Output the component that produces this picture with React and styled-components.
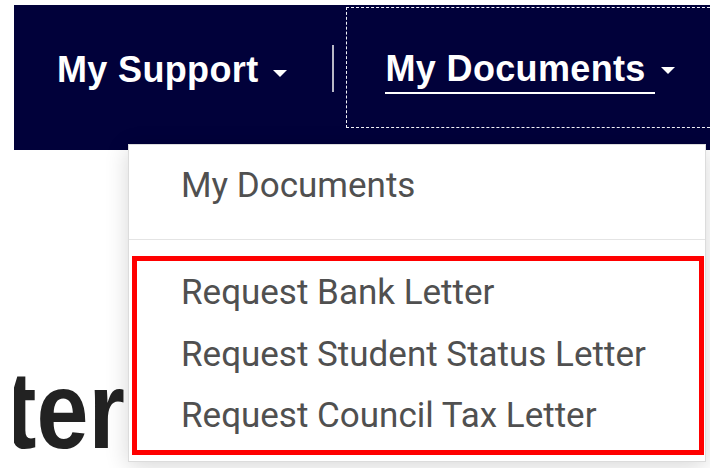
import React from 'react';
import styled, { createGlobalStyle } from 'styled-components';

const GlobalStyle = createGlobalStyle`
  html, body {
    margin: 0;
    padding: 0;
    background: #ffffff;
  }
  body {
    font-family: "Liberation Sans", Arial, sans-serif;
  }
`;

const Page = styled.div`
  position: relative;
  width: 710px;
  height: 468px;
  overflow: hidden;
  padding-top: 5px;
  box-sizing: border-box;
`;

const NavBar = styled.nav`
  display: flex;
  align-items: flex-start;
  height: 145px;
  margin-left: 14px;
  padding-left: 43px;
  background: #01013a;
  box-sizing: border-box;
`;

const NavItem = styled.div`
  display: flex;
  align-items: center;
  gap: 6px;
  margin-top: ${props => props.top}px;
  color: #ffffff;
  font-family: "Liberation Sans", Arial, sans-serif;
  font-weight: 700;
  font-size: 36px;
  letter-spacing: 0.35px;
  line-height: 40px;
  white-space: nowrap;
`;

const NavLabel = styled.span`
  padding-right: 9px;
  padding-bottom: 3px;
  border-bottom: 2px solid ${props => props.active ? '#ffffff' : 'transparent'};
`;

const Caret = styled.span`
  width: 0;
  height: 0;
  border-left: 7px solid transparent;
  border-right: 7px solid transparent;
  border-top: 7px solid #ffffff;
  margin-top: ${props => props.offset || 0}px;
`;

const Separator = styled.div`
  width: 2px;
  height: 47px;
  margin: 40px 0 0 45px;
  background: #b9b9c6;
`;

const FocusRing = styled.div`
  flex: 1;
  height: 121px;
  margin: 2px -10px 0 12px;
  padding: 41px 0 0 38px;
  border: 1px dashed #f2f2f8;
  box-sizing: border-box;
`;

const Content = styled.main`
  height: 318px;
  margin-left: 14px;
  overflow: hidden;
`;

const Heading = styled.h1`
  margin: 205px 0 0 -149px;
  color: #222222;
  font-family: "Liberation Sans", Arial, sans-serif;
  font-weight: 700;
  font-size: 110px;
  line-height: 110px;
  white-space: nowrap;
  transform: scaleX(0.85);
  transform-origin: left center;
`;

const Dropdown = styled.div`
  position: absolute;
  left: 128px;
  top: 144px;
  width: 578px;
  height: 318px;
  padding: 10px 1px 0 3px;
  background: #ffffff;
  border: 1px solid #dcdcdc;
  box-shadow: 0 4px 22px rgba(0, 0, 0, 0.16);
  box-sizing: border-box;
  font-family: Roboto, "Liberation Sans", sans-serif;
`;

const MenuLink = styled.div`
  padding-left: ${props => props.indent}px;
  color: #505050;
  font-size: 35px;
  line-height: ${props => props.rowHeight}px;
  white-space: nowrap;
`;

const MenuHeader = styled.div`
  padding-bottom: 22px;
  margin: 0 -1px 0 -3px;
  border-bottom: 1px solid #e4e4e4;
`;

const Highlight = styled.div`
  margin-top: 16px;
  padding: 1px 0 3px;
  border: 5px solid #ff0000;
`;

const requests = [
  'Request Bank Letter',
  'Request Student Status Letter',
  'Request Council Tax Letter',
];

export default function App() {
  return (
    <>
      <GlobalStyle />
      <Page>
        <NavBar>
          <NavItem top={45}>
            <NavLabel>My Support</NavLabel>
            <Caret offset={2} />
          </NavItem>
          <Separator />
          <FocusRing>
            <NavItem top={0}>
              <NavLabel active>My Documents</NavLabel>
              <Caret offset={-2} />
            </NavItem>
          </FocusRing>
        </NavBar>
        <Content>
          <Heading>Letter</Heading>
        </Content>
        <Dropdown>
          <MenuHeader>
            <MenuLink indent={52} rowHeight={62}>My Documents</MenuLink>
          </MenuHeader>
          <Highlight>
            {requests.map(item => (
              <MenuLink key={item} indent={44} rowHeight={61.5}>{item}</MenuLink>
            ))}
          </Highlight>
        </Dropdown>
      </Page>
    </>
  );
}
